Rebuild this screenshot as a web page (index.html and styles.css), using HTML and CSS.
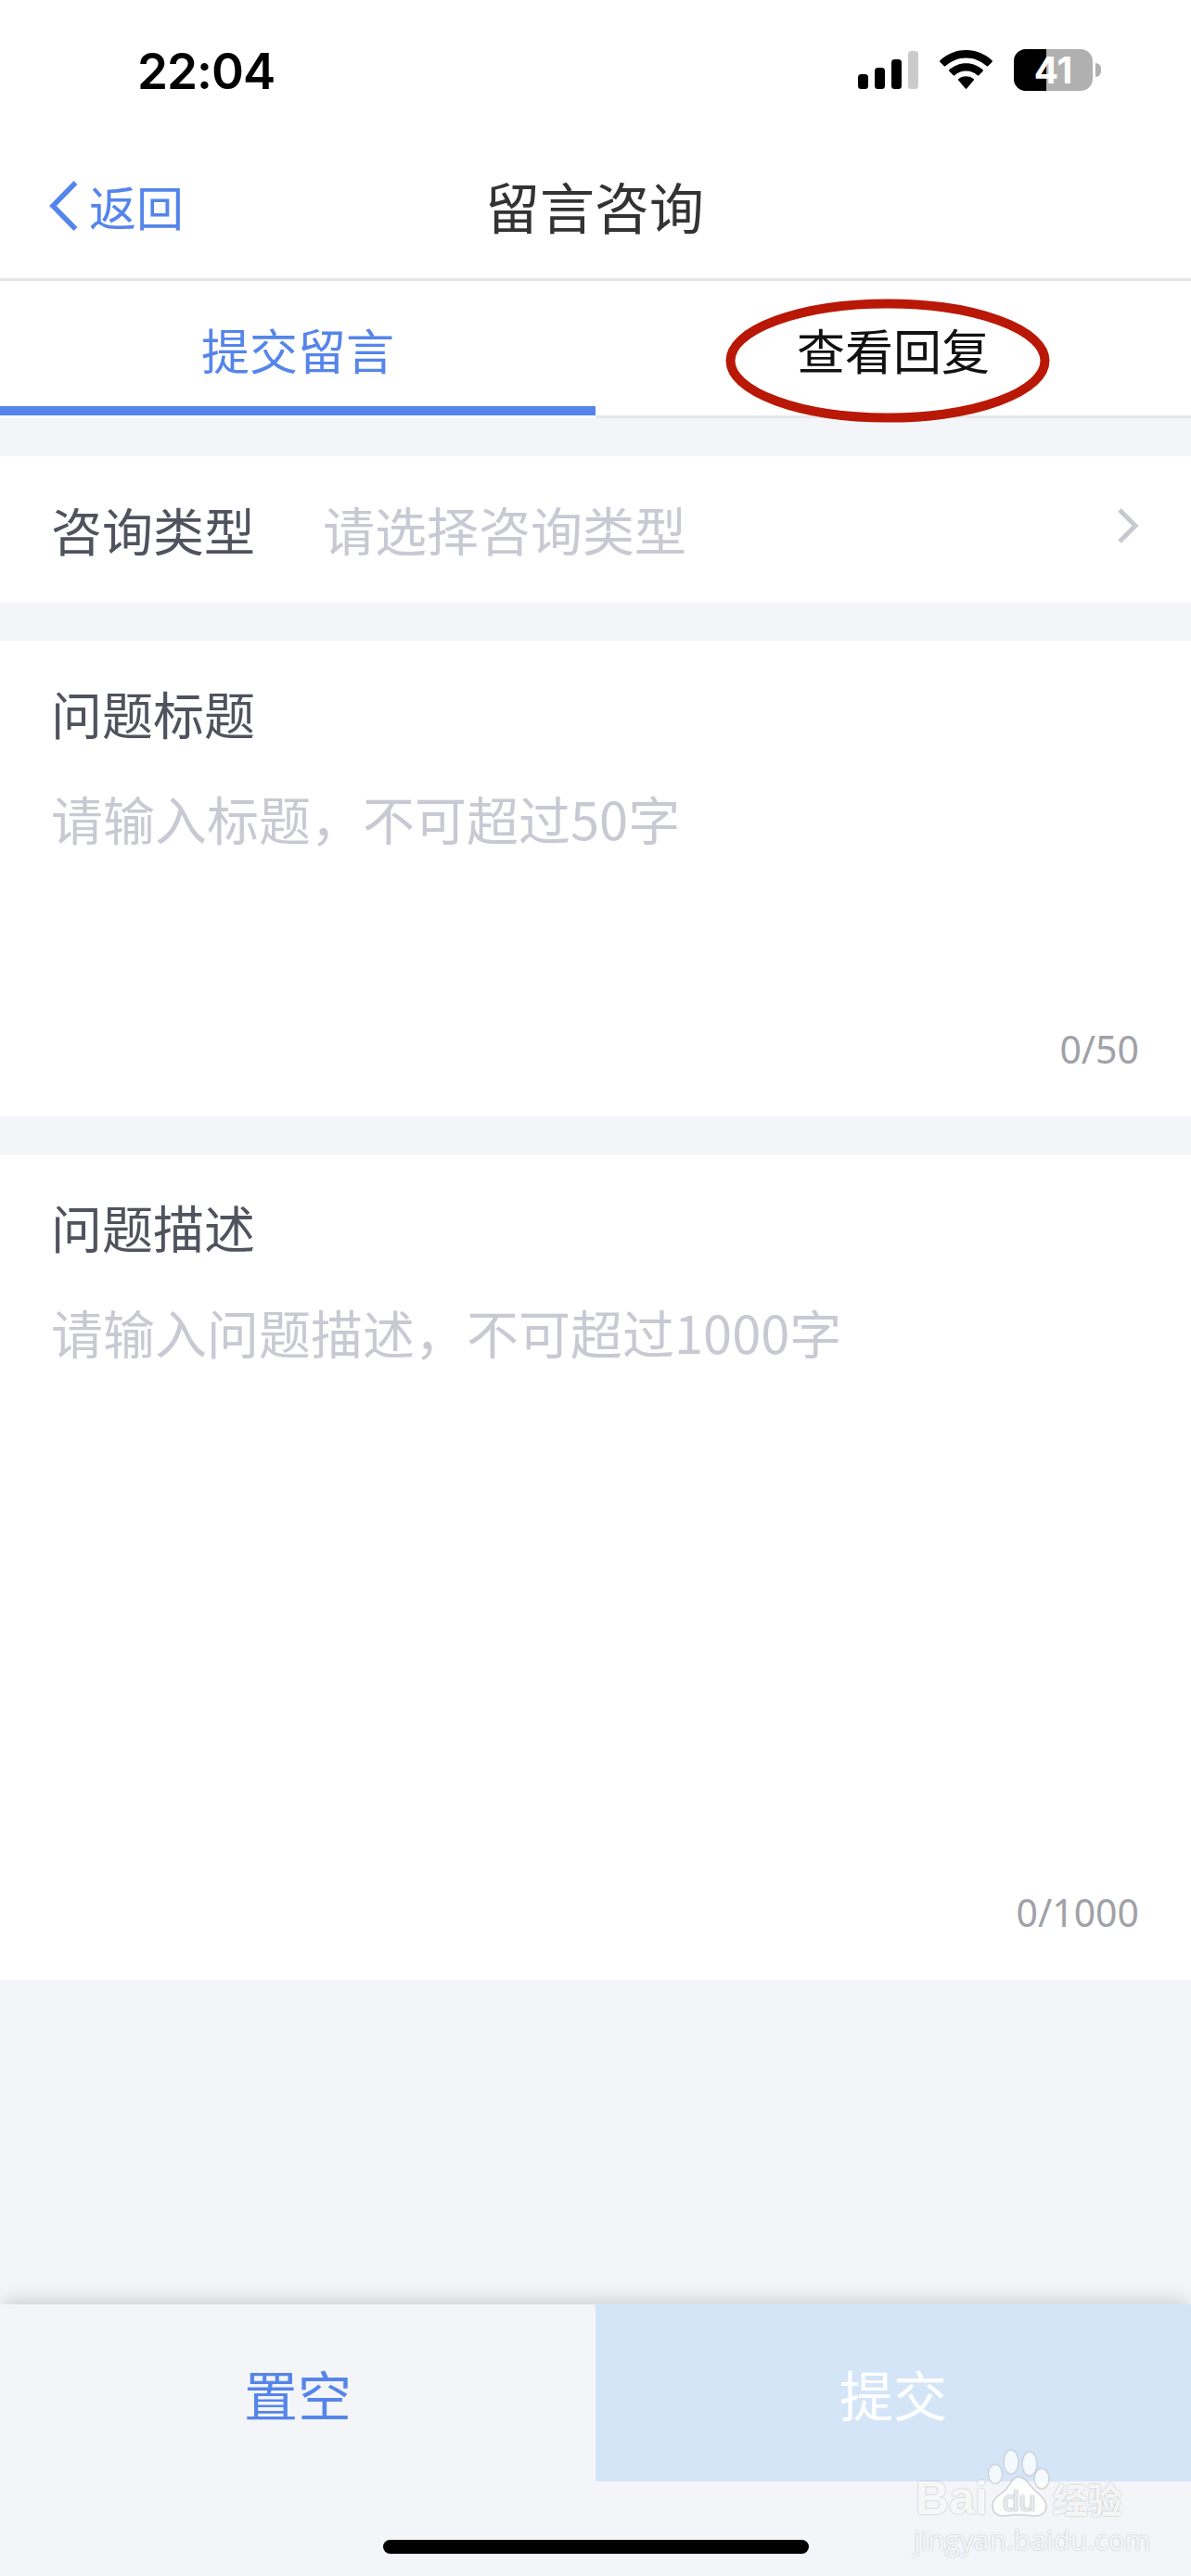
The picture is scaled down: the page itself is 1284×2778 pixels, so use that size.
FILE: index.html
```html
<!DOCTYPE html>
<html lang="zh-CN">
<head>
<meta charset="utf-8">
<title>留言咨询</title>
<link rel="stylesheet" href="styles.css">
</head>
<body>
<div class="page">
  <header class="status">
    <span class="time">22:04</span>
    <div class="status-icons">
      <svg class="signal" width="65" height="41" viewBox="0 0 65 41">
        <rect x="0" y="25" width="11" height="16" rx="3.5" fill="#000"/>
        <rect x="18" y="18" width="11" height="23" rx="3.5" fill="#000"/>
        <rect x="36" y="9" width="11" height="32" rx="3.5" fill="#000"/>
        <rect x="54" y="0" width="11" height="41" rx="3.5" fill="#cbcbcb"/>
      </svg>
      <svg class="wifi" width="57" height="42" viewBox="0 0 57 42">
        <path d="M28.5 0C17.5 0 7.7 4.300 0.300 11.400C-.100 11.800 -.100 12.300 .300 12.700L4.800 17.300C5.200 17.700 5.800 17.700 6.200 17.300C12 11.800 19.900 8.400 28.500 8.400C37.100 8.400 45 11.800 50.800 17.300C51.200 17.700 51.800 17.700 52.200 17.300L56.700 12.700C57.100 12.300 57.100 11.800 56.700 11.400C49.300 4.300 39.500 0 28.500 0Z" fill="#000"/>
        <path d="M28.500 14.200C21.500 14.200 15.100 16.900 10.300 21.300C9.900 21.700 9.900 22.300 10.300 22.700L14.800 27.200C15.200 27.600 15.800 27.600 16.200 27.200C19.500 24.300 23.800 22.500 28.500 22.500C33.200 22.500 37.500 24.300 40.800 27.200C41.200 27.600 41.800 27.600 42.200 27.200L46.700 22.700C47.100 22.300 47.100 21.700 46.700 21.300C41.900 16.900 35.500 14.200 28.500 14.200Z" fill="#000"/>
        <path d="M28.500 28.300C25.300 28.300 22.400 29.400 20.200 31.300C19.800 31.700 19.800 32.200 20.200 32.600L27.800 41.500C28.200 42 28.800 42 29.200 41.500L36.800 32.600C37.200 32.200 37.200 31.700 36.800 31.300C34.600 29.400 31.700 28.300 28.500 28.300Z" fill="#000"/>
      </svg>
      <div class="battery">
        <div class="battery-body"><div class="battery-fill"></div><span class="battery-num">41</span></div>
        <div class="battery-nub"></div>
      </div>
    </div>
  </header>

  <nav class="navbar">
    <div class="back">
      <svg class="back-icon" width="32" height="56" viewBox="0 0 32 56"><path d="M28.500 3L4 28L28.500 53" fill="none" stroke="#5585ea" stroke-width="5.500"/></svg>
      <span class="back-text">返回</span>
    </div>
    <h1 class="nav-title">留言咨询</h1>
  </nav>

  <div class="tabs">
    <div class="tab tab-active">提交留言</div>
    <div class="tab">查看回复
      <svg class="mark" width="350" height="134" viewBox="0 0 350 134"><ellipse cx="175" cy="67" rx="169.500" ry="61.500" fill="none" stroke="#b91807" stroke-width="10"/></svg>
    </div>
  </div>

  <main class="content">
    <section class="row">
      <span class="label">咨询类型</span>
      <span class="placeholder row-value">请选择咨询类型</span>
      <svg class="chev" width="24" height="38" viewBox="0 0 24 38"><path d="M3 2L20 19L3 36" fill="none" stroke="#c8c9d0" stroke-width="5"/></svg>
    </section>
    <section class="card">
      <span class="label">问题标题</span>
      <span class="placeholder card-ph">请输入标题，不可超过50字</span>
      <span class="counter">0/50</span>
    </section>
    <section class="card card-tall">
      <span class="label">问题描述</span>
      <span class="placeholder card-ph">请输入问题描述，不可超过1000字</span>
      <span class="counter">0/1000</span>
    </section>
  </main>

  <footer class="footer">
    <div class="actions">
      <div class="btn btn-reset">置空</div>
      <div class="btn btn-submit">提交</div>
    </div>
    <div class="home-zone"><div class="home-bar"></div></div>
  </footer>

  <div class="watermark">
    <svg class="paw" width="70" height="76" viewBox="0 0 70 76">
      <ellipse cx="8" cy="27" rx="7.500" ry="10.500" fill="#fff" fill-opacity=".75" stroke="#c3c6cd" stroke-opacity=".7" stroke-width="1.500"/>
      <ellipse cx="25" cy="14" rx="8" ry="13" fill="#fff" fill-opacity=".75" stroke="#c3c6cd" stroke-opacity=".7" stroke-width="1.500"/>
      <ellipse cx="45" cy="16" rx="8" ry="13" fill="#fff" fill-opacity=".75" stroke="#c3c6cd" stroke-opacity=".7" stroke-width="1.500"/>
      <ellipse cx="58" cy="32" rx="8" ry="11" fill="#fff" fill-opacity=".75" stroke="#c3c6cd" stroke-opacity=".7" stroke-width="1.500"/>
      <path d="M33 30C40 30 44 38 50 44C56 50 63 54 63 62C63 70 56 73 48 72C40 71 26 71 18 72C10 73 5 69 5 61C5 52 14 50 20 43C24 38 27 30 33 30Z" fill="#fff" fill-opacity=".85" stroke="#c3c6cd" stroke-opacity=".8" stroke-width="1.500"/>
    </svg>
    <div class="wm-line">
      <span>Bai</span>
      <span class="wm-du">du</span>
      <span class="wm-cn">经验</span>
    </div>
    <div class="wm-url">jingyan.baidu.com</div>
  </div>
</div>
</body>
</html>
```

FILE: styles.css
```css
* { box-sizing: border-box; margin: 0; padding: 0; }
html, body { width: 1284px; height: 2778px; overflow: hidden; background: #f4f5f9; }
body { font-family: "Noto Sans CJK SC", "Noto Sans", sans-serif; }
.page { position: relative; width: 1284px; height: 2778px; display: flex; flex-direction: column; }

.status { height: 150px; background: #fff; display: flex; justify-content: space-between; align-items: flex-start; padding: 54px 97px 0 148px; }
.time { font-family: Inter, "Liberation Sans", sans-serif; font-weight: 600; font-size: 53px; line-height: 46px; color: #000; letter-spacing: -1px; }
.status-icons { display: flex; align-items: flex-start; margin-top: -1px; }
.signal { display: block; margin-top: 2px; }
.wifi { display: block; margin-left: 23px; margin-top: 1px; }
.battery { display: flex; align-items: center; margin-left: 23px; }
.battery-body { position: relative; width: 85px; height: 45px; border-radius: 13px; background: #b0b0b0; overflow: hidden; display: flex; align-items: center; justify-content: center; }
.battery-fill { position: absolute; left: 0; top: 0; bottom: 0; width: 35px; background: #000; }
.battery-num { position: relative; font-family: Inter, "Liberation Sans", sans-serif; font-weight: 700; font-size: 39px; line-height: 45px; color: #fff; }
.battery-nub { width: 6px; height: 15px; margin-left: 3px; border-radius: 0 7px 7px 0; background: #b0b0b0; }

.navbar { position: relative; height: 153px; background: #fff; border-bottom: 3px solid #e4e4e8; display: flex; align-items: center; justify-content: center; padding: 0 2px 6px 0; }
.back { position: absolute; left: 53px; top: 0; bottom: 6px; display: flex; align-items: center; }
.back-icon { display: block; }
.back-text { margin-left: 11px; font-size: 51px; line-height: 60px; color: #5585ea; }
.nav-title { font-size: 59px; font-weight: 400; line-height: 70px; color: #333; }

.tabs { height: 148px; display: flex; background: #fff; }
.tab { position: relative; flex: 1; display: flex; align-items: center; justify-content: center; font-size: 52px; color: #111; border-bottom: 3px solid #e8e8ea; padding-top: 2px; }
.tab-active { color: #5585ea; border-bottom: 10px solid #5585ea; padding-top: 12px; margin-bottom: 3px; }
.mark { position: absolute; left: 140px; top: 19px; }

.content { flex: 1; display: flex; flex-direction: column; gap: 41px; padding-top: 41px; }
.row { height: 158px; background: #fff; display: flex; align-items: center; padding: 0 56px 3px 55px; }
.label { font-size: 55px; line-height: 70px; color: #50535e; }
.placeholder { font-size: 56px; line-height: 70px; color: #c8c9d2; }
.row-value { margin-left: 73px; flex: 1; }
.chev { display: block; margin-top: -5px; }
.card { height: 513px; background: #fff; display: flex; flex-direction: column; padding: 42px 56px 0 55px; }
.card-tall { height: 890px; }
.card-ph { margin-top: 44px; }
.counter { margin-top: auto; margin-bottom: 50px; align-self: flex-end; font-size: 41px; line-height: 46px; color: #a0a1a8; font-family: "Noto Sans", sans-serif; }

.footer { height: 293px; background: #f4f5f9; box-shadow: 0 -8px 18px -4px rgba(0,0,0,.16); display: flex; flex-direction: column; }
.actions { height: 191px; display: flex; }
.btn { flex: 1; display: flex; align-items: center; justify-content: center; font-size: 58px; }
.btn-reset { color: #5585ea; }
.btn-submit { color: #fff; background: #d4e5f8; }
.home-zone { flex: 1; display: flex; justify-content: center; padding-top: 63px; }
.home-bar { width: 459px; height: 15px; border-radius: 8px; background: #000; }

.watermark { position: absolute; left: 985px; top: 2641px; width: 232px; height: 116px; color: #fff; }
.paw { position: absolute; left: 80px; top: 0; }
.wm-line { position: absolute; left: 2px; top: 31px; height: 44px; display: flex; align-items: center; font-family: "Liberation Sans", sans-serif; font-weight: 700; font-size: 50px; line-height: 44px; color: rgba(255,255,255,.9); text-shadow: 0 0 2px #a9acb4; }
.wm-du { width: 60px; margin-left: 4px; text-align: center; font-size: 32px; font-weight: 400; color: #e9ebef; text-shadow: 0 0 2px #8f929a; padding-top: 6px; line-height: 36px; }
.wm-cn { margin-left: 6px; font-family: "Noto Sans CJK SC", sans-serif; font-size: 38px; line-height: 44px; letter-spacing: -1px; }
.wm-url { position: absolute; left: 0; top: 80px; font-family: "Open Sans", sans-serif; font-size: 30px; line-height: 36px; white-space: nowrap; color: rgba(255,255,255,.9); text-shadow: 0 0 2px #a9acb4; }
```
